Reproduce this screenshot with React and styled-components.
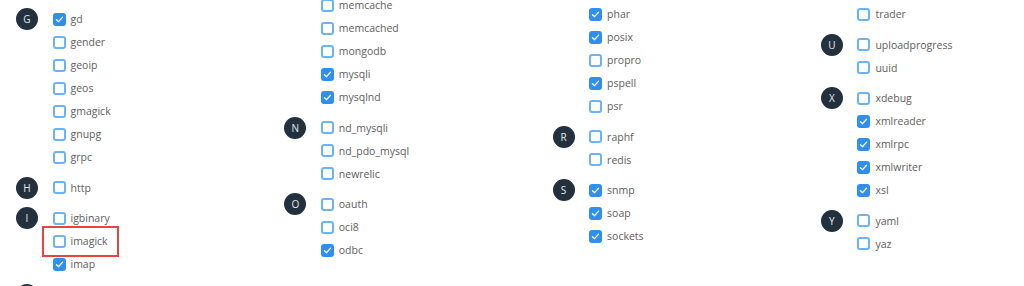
import styled, { createGlobalStyle } from "styled-components"

const GlobalStyle = createGlobalStyle`
    html, body {
        margin: 0;
        padding: 0;
        background: #fff;
        overflow: hidden;
    }
    body {
        font-family: "Open Sans", "Noto Sans", sans-serif;
    }
`

const columns = [
    {
        offset: 7.5,
        groups: [
            { letter: 'G', items: [['gd', true], ['gender'], ['geoip'], ['geos'], ['gmagick'], ['gnupg'], ['grpc']] },
            { letter: 'H', items: [['http']] },
            { letter: 'I', items: [['igbinary'], ['imagick', false, true], ['imap', true]] },
            { letter: 'J', items: [['json', true]] },
        ],
    },
    {
        offset: -29.5,
        groups: [
            { letter: 'M', items: [['mbstring', true], ['memcache'], ['memcached'], ['mongodb'], ['mysqli', true], ['mysqlnd', true]] },
            { letter: 'N', items: [['nd_mysqli'], ['nd_pdo_mysql'], ['newrelic']] },
            { letter: 'O', items: [['oauth'], ['oci8'], ['odbc', true]] },
        ],
    },
    {
        offset: -43.5,
        groups: [
            { letter: 'P', items: [['pdo_sqlite'], ['pgsql'], ['phar', true], ['posix', true], ['propro'], ['pspell', true], ['psr']] },
            { letter: 'R', items: [['raphf'], ['redis']] },
            { letter: 'S', items: [['snmp', true], ['soap', true], ['sockets', true]] },
        ],
    },
    {
        offset: -43.5,
        groups: [
            { letter: 'T', items: [['tidy'], ['timezonedb'], ['trader']] },
            { letter: 'U', items: [['uploadprogress'], ['uuid']] },
            { letter: 'X', items: [['xdebug'], ['xmlreader', true], ['xmlrpc', true], ['xmlwriter', true], ['xsl', true]] },
            { letter: 'Y', items: [['yaml'], ['yaz']] },
        ],
    },
]

const Page = styled.div`
    display: grid;
    grid-template-columns: repeat(4, 268.3px);
    padding-left: 16px;
    height: 286px;
    overflow: hidden;
`

const Column = styled.div`
    display: flex;
    flex-direction: column;
    gap: 7.5px;
    margin-top: ${({ offset }) => offset}px;
`

const Group = styled.div`
    display: flex;
    align-items: flex-start;
    gap: 14.5px;
`

const Badge = styled.div`
    width: 22px;
    height: 22px;
    flex: none;
    margin-top: 0.5px;
    border-radius: 50%;
    background: #23313f;
    color: #e6e8ea;
    font-size: 10px;
    font-weight: 400;
    display: flex;
    align-items: center;
    justify-content: center;
`

const List = styled.ul`
    list-style: none;
    margin: 0;
    padding: 0;
    display: flex;
    flex-direction: column;
`

const Row = styled.li`
    position: relative;
    height: 23px;
    display: flex;
    align-items: center;
    gap: 5px;
    font-size: 10.5px;
    color: #5e5e5e;

    ${({ highlight }) => highlight && `
        &::after {
            content: '';
            position: absolute;
            left: -10.5px;
            top: -4px;
            width: 77px;
            height: 31px;
            box-sizing: border-box;
            border: 2.5px solid #e8453e;
        }
    `}
`

const Box = styled.span`
    width: 13px;
    height: 13px;
    flex: none;
    box-sizing: border-box;
    border-radius: 3px;
    border: 2px solid ${({ checked }) => checked ? '#2f8fef' : '#6ab3f7'};
    background: ${({ checked }) => checked ? '#2f8fef' : '#fff'};
    display: flex;
    align-items: center;
    justify-content: center;
`

function Checkbox({ checked }) {
    return (
        <Box checked={checked}>
            {checked && (
                <svg width="9" height="9" viewBox="0 0 10 10">
                    <path d="M1.6 5.2 L4 7.4 L8.4 2.4" fill="none" stroke="#fff" strokeWidth="1.5" strokeLinecap="round" strokeLinejoin="round" />
                </svg>
            )}
        </Box>
    )
}

export default function App() {
    return (
        <>
            <GlobalStyle />
            <Page>
                {columns.map((col, i) => (
                    <Column key={i} offset={col.offset}>
                        {col.groups.map(g => (
                            <Group key={g.letter}>
                                <Badge>{g.letter}</Badge>
                                <List>
                                    {g.items.map(([name, checked, highlight]) => (
                                        <Row key={name} highlight={highlight}>
                                            <Checkbox checked={checked} />
                                            {name}
                                        </Row>
                                    ))}
                                </List>
                            </Group>
                        ))}
                    </Column>
                ))}
            </Page>
        </>
    )
}
